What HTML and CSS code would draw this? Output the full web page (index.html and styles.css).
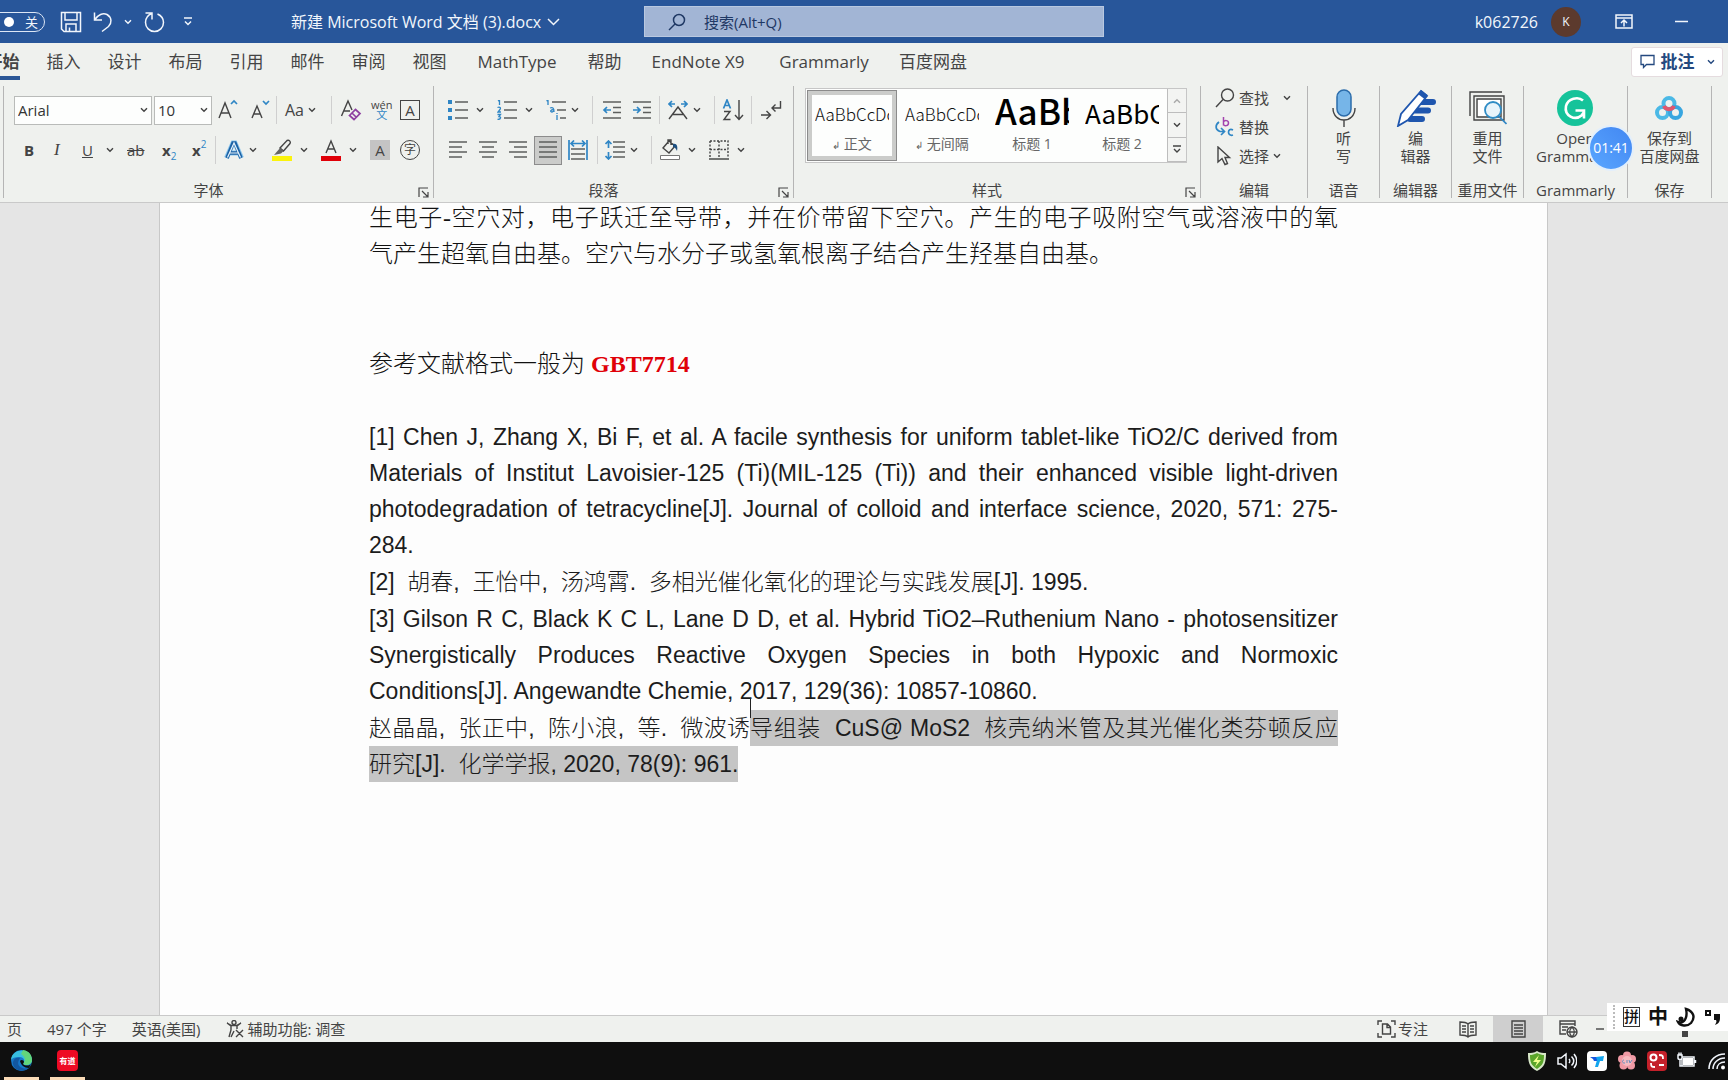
FILE: index.html
```html
<!DOCTYPE html>
<html lang="zh-CN">
<head>
<meta charset="utf-8">
<title>新建 Microsoft Word 文档 (3).docx</title>
<link rel="stylesheet" href="styles.css">
</head>
<body>
<svg class="defs" aria-hidden="true">
  <symbol id="chev" viewBox="0 0 8 6"><path d="M1 1.2 4 4.3 7 1.2" fill="none" stroke="currentColor" stroke-width="1.4"/></symbol>
  <symbol id="launch" viewBox="0 0 11 11"><path d="M1 10V1h9M4 4l5.500 5.500M10 5v5H5" fill="none" stroke="currentColor" stroke-width="1.200"/></symbol>
</svg>

<header class="titlebar">
  <div class="quick">
    <button class="toggle" aria-label="自动保存"><i></i><span>关</span></button>
    <button aria-label="保存"><svg width="22" height="22" viewBox="0 0 22 22"><path d="M1.500 1.500h19v19H4l-2.500-2.500zM5 1.500V9h12V1.500M6 20.500V13h10v7.500M9.500 20.500v-4" class="w"/></svg></button>
    <button aria-label="撤消"><svg width="20" height="22" viewBox="0 0 20 22"><path d="M1.500 1.500V9H9M1.500 9C5 3.500 10 1.500 14 3.500c5 3 5 8.500 1.500 12L9 20.500" class="w"/></svg></button>
    <button aria-label="撤消列表"><svg width="8" height="6"><use href="#chev"/></svg></button>
    <button aria-label="重复"><svg width="22" height="22" viewBox="0 0 22 22"><path d="M1.500 2H8v6.500M8 2.500C4 4 1.500 7.500 1.500 11.500a9 9 0 0 0 18 0c0-4-2.500-7-6-8.500" class="w"/></svg></button>
    <button aria-label="自定义快速访问工具栏"><svg width="10" height="10" viewBox="0 0 10 10"><path d="M1 1h8M2 4.500l3 3 3-3" class="w"/></svg></button>
  </div>
  <div class="doc-name">新建 Microsoft Word 文档 (3).docx<svg width="13" height="8" viewBox="0 0 13 8"><path d="M1 1l5.500 5.500L12 1" class="w"/></svg></div>
  <label class="search"><svg width="18" height="18" viewBox="0 0 18 18"><circle cx="11" cy="7" r="5.500" fill="none" stroke="#1f3864" stroke-width="1.500"/><path d="M7 11 1 17" stroke="#1f3864" stroke-width="1.500"/></svg><input type="text" placeholder="搜索(Alt+Q)" aria-label="搜索"></label>
  <div class="account">
    <span>k062726</span><span class="avatar">K</span>
    <button aria-label="功能区显示选项"><svg width="18" height="15" viewBox="0 0 18 15"><path d="M1 1h16v13H1zM1 4h16M9 12.500V6.500M6 9l3-3 3 3" class="w"/></svg></button>
    <button aria-label="最小化"><svg width="13" height="3"><path d="M0 1.500h13" class="w"/></svg></button>
  </div>
</header>

<nav class="tabs">
  <a href="#" class="active"><span>开始</span></a><a href="#">插入</a><a href="#">设计</a><a href="#">布局</a><a href="#">引用</a><a href="#">邮件</a><a href="#">审阅</a><a href="#">视图</a><a href="#" class="t-math">MathType</a><a href="#">帮助</a><a href="#" class="t-wide">EndNote X9</a><a href="#" class="t-wide">Grammarly</a><a href="#" class="t-pan">百度网盘</a>
  <button class="comments"><svg width="15" height="15" viewBox="0 0 15 15"><path d="M1 1.500h13v9H6.500L3.500 13.500v-3H1z" fill="none" stroke="#24497f" stroke-width="1.300"/></svg><b>批注</b><svg width="8" height="6"><use href="#chev"/></svg></button>
</nav>

<section class="ribbon">
  <div class="group g-font">
    <div class="row font-1">
      <div class="combo family"><select aria-label="字体"><option>Arial</option></select><svg width="8" height="6"><use href="#chev"/></svg></div>
      <div class="combo size"><select aria-label="字号"><option>10</option></select><svg width="8" height="6"><use href="#chev"/></svg></div>
      <button aria-label="增大字号"><svg width="20" height="22" viewBox="0 0 20 22"><path d="M1 19 7 4l6 15M3 14h8" class="k"/><path d="M13 5l3-3 3 3" class="b"/></svg></button>
      <button aria-label="减小字号"><svg width="20" height="22" viewBox="0 0 20 22"><path d="M1 19 6 7l5 12M2.500 15h7" class="k"/><path d="M12 2l3 3 3-3" class="b"/></svg></button>
      <i class="sep"></i>
      <button class="aa">Aa<svg width="8" height="6"><use href="#chev"/></svg></button>
      <i class="sep"></i>
      <button aria-label="清除格式"><svg width="22" height="22" viewBox="0 0 22 22"><path d="M1.500 17 8 2l4 9M4 12h6" class="k"/><path d="M9.500 16.500l6-6 4.500 4-6 6zM12 14l4.500 4.500" fill="none" stroke="#8e3fa0" stroke-width="1.700"/></svg></button>
      <button class="pinyin" aria-label="拼音指南"><span>wén</span><span>文</span></button>
      <button class="boxed">A</button>
    </div>
    <div class="row font-2">
      <button><b>B</b></button><button><em>I</em></button><button><u>U</u></button><button aria-label="下划线样式"><svg width="8" height="6"><use href="#chev"/></svg></button>
      <button><s>ab</s></button><button class="script"><b>x</b><sub>2</sub></button><button class="script"><b>x</b><sup>2</sup></button>
      <i class="sep"></i>
      <button aria-label="文本效果"><svg width="20" height="22" viewBox="0 0 20 22"><path d="M2.500 19 9 4h2l6.500 15M5.500 14h9" fill="none" stroke="#8cc7ee" stroke-width="5"/><path d="M3 19 9 4h2l6 15M5.500 14h9" fill="none" stroke="#1c62a5" stroke-width="3.500"/><path d="M3.500 18.500 10 4l6.500 14.500M6 14h8" fill="none" stroke="#e8f4fc" stroke-width="1.200"/></svg></button>
      <button aria-label="文本效果选项"><svg width="8" height="6"><use href="#chev"/></svg></button>
      <button aria-label="突出显示"><svg width="20" height="22" viewBox="0 0 20 22"><path d="M0 17h20v5H0z" fill="#fbf30c"/><path d="M8 9l7-7.500c2-1 4 1 3 3L11.500 12z" class="k"/><path d="M8 9l3.500 3L9 14.500 2 16z" fill="#666"/></svg></button>
      <button aria-label="突出显示颜色"><svg width="8" height="6"><use href="#chev"/></svg></button>
      <button aria-label="字体颜色"><svg width="20" height="22" viewBox="0 0 20 22"><path d="M0 17h20v5H0z" fill="#e00008"/><path d="M5 14 10 2l5 12M6.500 10h7" class="k"/></svg></button>
      <button aria-label="字体颜色选项"><svg width="8" height="6"><use href="#chev"/></svg></button>
      <button class="shade">A</button><button class="ring">字</button>
    </div>
    <div class="caption tool">字体<button aria-label="字体设置"><svg width="11" height="11"><use href="#launch"/></svg></button></div>
  </div>

  <div class="group g-para">
    <div class="row para-1">
      <button aria-label="项目符号"><svg width="20" height="20" viewBox="0 0 20 20"><path d="M0 0h4v4H0zM0 8h4v4H0zM0 16h4v4H0z" fill="#2f86c5"/><path d="M7 2h13M7 10h13M7 18h13" class="l"/></svg></button>
      <button aria-label="项目符号库"><svg width="8" height="6"><use href="#chev"/></svg></button>
      <button aria-label="编号"><svg width="20" height="20" viewBox="0 0 20 20"><path d="M1 1l1.500-1v5M.5 7.500C3 6.500 4 8 3 9.500L1 12h3M.5 14.500h3L2 16.500c2.500 0 2 3-1.500 3" fill="none" stroke="#2f86c5" stroke-width="1.300"/><path d="M7 2h13M7 10h13M7 18h13" class="l"/></svg></button>
      <button aria-label="编号库"><svg width="8" height="6"><use href="#chev"/></svg></button>
      <button aria-label="多级列表"><svg width="20" height="20" viewBox="0 0 20 20"><path d="M.5 1 2 0v5M4 8c3-1 4 0 4 4M8 9.500c-4 0-4 2.500-2 2.500l2-1M11 15v5M11 13v1" fill="none" stroke="#2f86c5" stroke-width="1.300"/><path d="M6 2h14M11 10h9M14 18h6" class="l"/></svg></button>
      <button aria-label="多级列表库"><svg width="8" height="6"><use href="#chev"/></svg></button>
      <i class="sep"></i>
      <button aria-label="减少缩进量"><svg width="20" height="18" viewBox="0 0 20 18"><path d="M1 1h18M11 6.500h8M11 11.500h8M1 17h18" class="l"/><path d="M9 9H2M5 6 2 9l3 3" class="b"/></svg></button>
      <button aria-label="增加缩进量"><svg width="20" height="18" viewBox="0 0 20 18"><path d="M1 1h18M11 6.500h8M11 11.500h8M1 17h18" class="l"/><path d="M1 9h7M5 6l3 3-3 3" class="b"/></svg></button>
      <i class="sep"></i>
      <button aria-label="中文版式"><svg width="20" height="20" viewBox="0 0 20 20"><path d="M1 19 10 7l9 12M5 14.500h10" class="k"/><path d="M7 4H1M4 1 1 4l3 3M13 4h6M16 1l3 3-3 3" class="b"/></svg></button>
      <button aria-label="中文版式选项"><svg width="8" height="6"><use href="#chev"/></svg></button>
      <i class="sep"></i>
      <button aria-label="排序"><svg width="22" height="22" viewBox="0 0 22 22"><path d="M1.500 9.500 5 1l3.500 8.500M3 6.500h4" class="b"/><path d="M2 12.500h6L2 20.500h6.500M17 1v19M13 16l4 4.500 4-4.500" class="k"/></svg></button>
      <i class="sep"></i>
      <button aria-label="显示编辑标记"><svg width="22" height="20" viewBox="0 0 22 20"><path d="M1 15h9M6.500 11l4 4-4 4M20.500 1v7H12M15.500 4.500 12 8l3.500 3.500" class="k"/></svg></button>
    </div>
    <div class="row para-2">
      <button aria-label="左对齐"><svg width="18" height="18" viewBox="0 0 18 18"><path d="M0 1h18M0 6h13M0 11h18M0 16h13" class="l"/></svg></button>
      <button aria-label="居中"><svg width="18" height="18" viewBox="0 0 18 18"><path d="M0 1h18M3 6h12M0 11h18M3 16h12" class="l"/></svg></button>
      <button aria-label="右对齐"><svg width="18" height="18" viewBox="0 0 18 18"><path d="M0 1h18M5 6h13M0 11h18M5 16h13" class="l"/></svg></button>
      <button class="pressed" aria-label="两端对齐"><svg width="18" height="18" viewBox="0 0 18 18"><path d="M0 1h18M0 6h18M0 11h18M0 16h18" class="l"/></svg></button>
      <button aria-label="分散对齐"><svg width="20" height="20" viewBox="0 0 20 20"><path d="M1 0v20M19 0v20M3 3.500h14M6 .500l-3 3 3 3M14 .500l3 3-3 3" class="b"/><path d="M3 9h14M3 14h14M3 19h14" class="l"/></svg></button>
      <i class="sep"></i>
      <button aria-label="行和段落间距"><svg width="20" height="20" viewBox="0 0 20 20"><path d="M8 2h12M8 7h12M8 12h12M8 17h12" class="l"/><path d="M3.500 1v7M.5 4l3-3 3 3M3.500 12v7M.5 16l3 3 3-3" class="b"/></svg></button>
      <button aria-label="行距选项"><svg width="8" height="6"><use href="#chev"/></svg></button>
      <i class="sep"></i>
      <button aria-label="底纹"><svg width="20" height="22" viewBox="0 0 20 22"><path d="M.5 16.500h19v4H.5z" fill="#fff" stroke="#777"/><path d="M9 2 3 9l6 5 6-7zM8 5V1h3v5" class="k"/><path d="M13 5c4-1 5 3 4 7-1-2-2-4-4-4z" fill="#1c4f80"/></svg></button>
      <button aria-label="底纹颜色"><svg width="8" height="6"><use href="#chev"/></svg></button>
      <button aria-label="边框"><svg width="20" height="20" viewBox="0 0 20 20"><path d="M1 1h18v17M1 1v17M10 1v17M1 9.500h18" fill="none" stroke="#444" stroke-width="1.400" stroke-dasharray="2 1.500"/><path d="M0 19h20" class="l"/></svg></button>
      <button aria-label="边框选项"><svg width="8" height="6"><use href="#chev"/></svg></button>
    </div>
    <div class="caption tool">段落<button aria-label="段落设置"><svg width="11" height="11"><use href="#launch"/></svg></button></div>
  </div>

  <div class="group g-style">
    <div class="gallery">
      <button class="card chosen"><span class="sample">AaBbCcDc</span><span class="name"><small>↲</small> 正文</span></button>
      <button class="card"><span class="sample">AaBbCcDc</span><span class="name"><small>↲</small> 无间隔</span></button>
      <button class="card"><span class="sample h1">AaBb</span><span class="name">标题 1</span></button>
      <button class="card"><span class="sample h2">AaBbC</span><span class="name">标题 2</span></button>
      <div class="scroller">
        <button class="off" aria-label="上一行"><svg class="flip" width="8" height="6"><use href="#chev"/></svg></button>
        <button aria-label="下一行"><svg width="8" height="6"><use href="#chev"/></svg></button>
        <button aria-label="其他"><svg width="10" height="9" viewBox="0 0 10 9"><path d="M1 1h8M2 4l3 3 3-3" class="k"/></svg></button>
      </div>
    </div>
    <div class="caption tool">样式<button aria-label="样式窗格"><svg width="11" height="11"><use href="#launch"/></svg></button></div>
  </div>

  <div class="group g-edit">
    <div class="commands">
      <button><svg width="20" height="20" viewBox="0 0 20 20"><circle cx="12.500" cy="7" r="6" class="k"/><path d="M8 11.500 1 19" class="k"/></svg>查找<svg class="far" width="8" height="6"><use href="#chev"/></svg></button>
      <button><svg width="20" height="20" viewBox="0 0 20 20"><path d="M8.500 0v8.500M8.500 5c1-2 5-2 5 1s-4 3.500-5 1.500" fill="none" stroke="#a344ae" stroke-width="1.500"/><path d="M4 5C0 8 0 13 5 14.500h4M6 11l3.500 3.500L6 18M18 13c-6-3-6 7 0 5" class="b"/></svg>替换</button>
      <button><svg width="20" height="20" viewBox="0 0 20 20"><path d="M3 1v15l4-3.500L10 18.500l2.500-1-2.500-6h4.500z" class="k"/></svg>选择<svg width="8" height="6"><use href="#chev"/></svg></button>
    </div>
    <div class="caption">编辑</div>
  </div>

  <div class="group g-one">
    <button class="big"><svg width="24" height="38" viewBox="0 0 24 38"><rect x="5" y="1" width="14" height="26" rx="7" fill="#76b5e8" stroke="#2b6cab" stroke-width="1.500"/><path d="M1 19c0 16 22 16 22 0M12 31v7" class="k"/></svg><span>听<br>写</span></button>
    <div class="caption">语音</div>
  </div>
  <div class="group g-one">
    <button class="big"><svg width="40" height="38" viewBox="0 0 40 38"><path d="M24 13h13M19 21.500h13M14 30h12" stroke="#1f56ae" stroke-width="6" stroke-linecap="round"/><path d="M25 2l6 5L12 31 2 37l3-12z" fill="#fff" stroke="#1f56ae" stroke-width="1.800"/><path d="M25 1l6.500 5-3 4L22 5z" fill="#1f56ae"/></svg><span>编<br>辑器</span></button>
    <div class="caption">编辑器</div>
  </div>
  <div class="group g-one">
    <button class="big"><svg width="38" height="34" viewBox="0 0 38 34"><path d="M1 25V1h32M5 5h30v24H5zM8 8h24v18H8z" class="k"/><path d="M9 9h22v16H9z" fill="#fff"/><circle cx="24" cy="19" r="8" fill="#e8f4fb" stroke="#2f8cc5" stroke-width="1.800"/><path d="M29.500 25l8 8" class="b"/></svg><span>重用<br>文件</span></button>
    <div class="caption">重用文件</div>
  </div>
  <div class="group g-gram">
    <button class="big"><svg width="36" height="36" viewBox="0 0 36 36"><circle cx="18" cy="18" r="18" fill="#15c39a"/><path d="M26 10.500C21 6 11 8.500 9 16c-2 10 9 15 15.500 9.500L27 22M18.500 20.500h8.500v8" fill="none" stroke="#fff" stroke-width="2.600"/></svg><span>Open<br>Grammarly</span></button>
    <div class="caption">Grammarly</div>
    <div class="timer">01:41</div>
  </div>
  <div class="group g-pan">
    <button class="big"><svg width="28" height="24" viewBox="0 0 28 24"><g fill="none" stroke-width="4"><circle cx="14" cy="7.500" r="5.500" stroke="#4bb9e6"/><circle cx="7.500" cy="16.500" r="5.500" stroke="#4bb9e6"/><circle cx="20.500" cy="16.500" r="5.500" stroke="#38a6e0"/><path d="M9 10a5.500 5.500 0 0 0 10 0" stroke="#e0566d"/></g></svg><span>保存到<br>百度网盘</span></button>
    <div class="caption">保存</div>
  </div>
</section>

<main class="canvas">
  <article class="page">
    <div class="body-text">
      <div class="full">生电子-空穴对，电子跃迁至导带，并在价带留下空穴。产生的电子吸附空气或溶液中的氧</div>
      <div>气产生超氧自由基。空穴与水分子或氢氧根离子结合产生羟基自由基。</div>
    </div>
    <h2 class="heading">参考文献格式一般为 <b>GBT7714</b></h2>
    <div class="refs">
      <div class="ref">
        <div class="full">[1] Chen J, Zhang X, Bi F, et al. A facile synthesis for uniform tablet-like TiO2/C derived from</div>
        <div class="full">Materials of Institut Lavoisier-125 (Ti)(MIL-125 (Ti)) and their enhanced visible light-driven</div>
        <div class="full">photodegradation of tetracycline[J]. Journal of colloid and interface science, 2020, 571: 275-</div>
        <div>284.</div>
      </div>
      <div class="ref">[2]&nbsp; 胡春,&nbsp; 王怡中,&nbsp; 汤鸿霄.&nbsp; 多相光催化氧化的理论与实践发展[J]. 1995.</div>
      <div class="ref">
        <div class="full">[3] Gilson R C, Black K C L, Lane D D, et al. Hybrid TiO2–Ruthenium Nano - photosensitizer</div>
        <div class="full">Synergistically Produces Reactive Oxygen Species in both Hypoxic and Normoxic</div>
        <div>Conditions[J]. Angewandte Chemie, 2017, 129(36): 10857-10860.</div>
      </div>
      <div class="ref">
        <div class="split"><span class="full">赵晶晶,&nbsp; 张正中,&nbsp; 陈小浪,&nbsp; 等.&nbsp; 微波诱</span><mark class="full caret">导组装&nbsp; CuS@ MoS2&nbsp; 核壳纳米管及其光催化类芬顿反应</mark></div>
        <mark>研究[J].&nbsp; 化学学报, 2020, 78(9): 961.</mark>
      </div>
    </div>
  </article>
</main>

<footer class="status">
  <div class="facts"><span>页</span><span>497 个字</span><span>英语(美国)</span><span class="with-icon"><svg width="18" height="18" viewBox="0 0 18 18"><circle cx="8" cy="2.500" r="2" class="k"/><path d="M1 3l4 3v4l-2 7M15 3l-4 3v3M1 3l4.500 2.500h5L15 3M5 17l3-6M10 10l7 7M17 10l-7 7" class="k"/></svg>辅助功能: 调查</span></div>
  <div class="views">
    <button class="with-icon"><svg width="19" height="18" viewBox="0 0 19 18"><path d="M5 1H1v4M14 1h4v4M1 13v4h4M18 13v4h-4M5.500 4h5l3 3v7h-8zM10 4v3.500h3.500" class="k"/></svg>专注</button>
    <button aria-label="阅读视图"><svg width="18" height="17" viewBox="0 0 18 17"><path d="M9 3C7 1 4 1 1 1v13c3 0 6 0 8 2 2-2 5-2 8-2V1c-3 0-6 0-8 2zM9 3v13M3 5h4M3 8h4M3 11h4M11 5h4M11 8h4M11 11h4" class="k"/></svg></button>
    <button class="on" aria-label="页面视图"><svg width="15" height="18" viewBox="0 0 15 18"><path d="M1 1h13v16H1zM3 5h9M3 8h9M3 11h9M3 14h9" class="k"/></svg></button>
    <button aria-label="Web 版式"><svg width="19" height="18" viewBox="0 0 19 18"><path d="M7 14H1V1h15v5M1 4h15M3 7h6M3 10h4" class="k"/><circle cx="13" cy="12" r="5" class="k"/><path d="M8 12h10M13 7c-3 3-3 7 0 10M13 7c3 3 3 7 0 10" class="k"/></svg></button>
    <button class="zoom-out" aria-label="缩小"><svg width="8" height="2"><path d="M0 1h8" class="k"/></svg></button>
    <i class="thumb"></i>
  </div>
  <div class="ime"><i class="grip"></i><span class="pin">拼</span><span>中</span>
    <svg width="20" height="20" viewBox="0 0 20 20"><path d="M10 2c7 2 10 8 5 14-4 4-11 3-13-1 6 2 10-4 8-13z" class="moon"/><circle cx="5" cy="12" r="2.500" fill="#111"/></svg>
    <svg width="18" height="18" viewBox="0 0 18 18"><path d="M2 3h4v4H2z" fill="none" stroke="#111" stroke-width="2"/><path d="M10 6h6v4c0 4-2 6-5 7 1-2 2-3 1-5h-2z" fill="#111"/></svg>
    <svg width="8" height="20" viewBox="0 0 8 20"><path d="M1 5l6-3v3H4v13H2V8z" fill="#111"/></svg>
  </div>
</footer>

<div class="taskbar">
  <div class="apps">
    <button aria-label="Edge"><svg width="21" height="21" viewBox="0 0 21 21"><circle cx="10.500" cy="10.500" r="10.500" fill="#1677c8"/><path d="M0 10C1-2 20-3 21 10c0 5-6 6-9 4 3-4 0-7-4-7-4 0-7 1-8 3z" fill="#38bfe0"/><path d="M12 0c7 1 9 6 9 10 0 5-6 6-9 4 4-5 1-8-2-10z" fill="#62d67c"/><path d="M8 10c-3 5 2 10 10 8-8 6-17 1-16-6 1-4 4-5 7-4z" fill="#1257a0"/><path d="M12 14c2 2 6 2 8 0l-2 4c-5 0-8-3-9-7 1-2 4-1 4 1z" fill="#0f0f0f"/></svg></button>
    <button aria-label="有道"><span class="youdao">有道</span></button>
  </div>
  <div class="tray">
    <svg viewBox="0 0 20 20"><path d="M10 0c3 2 6 2 9 2 0 9-1 14-9 18C2 16 1 11 1 2c3 0 6 0 9-2z" fill="#d8e8c8"/><path d="M10 2c3 1.500 5 2 7 2 0 7-1 10-7 14-6-4-7-7-7-14 2 0 4-.5 7-2z" fill="#5aa52a"/><path d="M12 4 6 11h4l-2 5 6-7h-4z" fill="#f2ff8c"/></svg>
    <svg viewBox="0 0 20 20"><path d="M1 7h3l5-4v14l-5-4H1zM12 8c1 1 1 3 0 4M14.500 5.500c3 3 3 6 0 9M17 3c4 5 4 9 0 14" class="w"/></svg>
    <svg viewBox="0 0 20 20"><rect width="20" height="20" rx="4" fill="#fff"/><path d="M3 6h9l-2 4H7L6 8z" fill="#1556e0"/><path d="M9 6l8-1-1 5h-3l-2 6H8l2-7z" fill="#12a5ee"/></svg>
    <svg viewBox="0 0 20 20"><g fill="#f09aa5"><circle cx="10" cy="4.500" r="4"/><circle cx="15" cy="8" r="4"/><circle cx="14" cy="14.500" r="4"/><circle cx="6.500" cy="14.500" r="4"/><circle cx="5" cy="8" r="4"/></g><circle cx="10" cy="10" r="5" fill="#f7bac0"/><path d="M7 9c-2 0-2 3 0 3h1M10 9v3M12 9l1 3 2-3" fill="none" stroke="#698dbb"/></svg>
    <svg viewBox="0 0 20 20"><rect width="20" height="20" rx="4" fill="#c4202a"/><circle cx="6.500" cy="6.500" r="3" fill="none" stroke="#fff" stroke-width="2"/><path d="M12 4c4 0 4 1 4 4M4 12c0 4 1 4 4 4M12 14h5" fill="none" stroke="#fff" stroke-width="1.800"/></svg>
    <svg viewBox="0 0 20 20"><path d="M5 6h12v9H5zM18.500 9v3M1 4h4v3c0 2-4 2-4 0zM2 1.500V4M4 1.500V4M3 8v7h2" class="w"/><path d="M6 7h10v7H6z" fill="#fff"/></svg>
    <svg viewBox="0 0 20 20"><path d="M2 18C2 9 9 3 18 3M6 18c0-6 5-11 12-11M10 18c0-4 3-7 8-7" class="w"/><circle cx="16" cy="16.500" r="2" fill="#fff"/></svg>
  </div>
</div>
</body>
</html>
```
FILE: styles.css
```css
* { box-sizing: border-box; }
body {
  margin: 0;
  min-height: 100vh;
  display: flex;
  flex-direction: column;
  overflow-x: hidden;
  background: #eff1ee;
  color: #444;
  font: 15px/20px "Open Sans", "Noto Sans CJK SC", sans-serif;
}
button {
  display: flex;
  align-items: center;
  justify-content: center;
  margin: 0;
  padding: 0;
  border: 0;
  background: none;
  color: inherit;
  font: inherit;
}
svg { flex: none; display: block; }
.defs { position: absolute; width: 0; height: 0; }
.w { fill: none; stroke: #f2f6fc; stroke-width: 1.5; }
.k { fill: none; stroke: #444; stroke-width: 1.4; }
.b { fill: none; stroke: #2f86c5; stroke-width: 1.7; }
.l { fill: none; stroke: #5d5f5d; stroke-width: 1.7; }

/* Title bar */
.titlebar {
  height: 43px;
  flex: none;
  display: grid;
  grid-template-columns: 291px 353px 460px 1fr;
  align-items: center;
  background: #28569a;
  color: #f2f6fc;
}
.quick {
  display: grid;
  grid-template-columns: 55px 32px 31px 20px 33px 34px;
  height: 40px;
  justify-items: center;
  align-items: center;
}
.quick .toggle {
  width: 60px;
  height: 20px;
  justify-self: end;
  margin-right: 10px;
  padding: 0 6px 0 18px;
  border: 1px solid #dce6f5;
  border-radius: 10px;
  justify-content: space-between;
  font-size: 13px;
}
.toggle i { width: 10px; height: 10px; border-radius: 50%; background: #fff; }
.doc-name { display: flex; align-items: center; gap: 6px; height: 40px; font-size: 16px; white-space: nowrap; }
.search {
  height: 31px;
  display: flex;
  align-items: center;
  gap: 18px;
  padding-left: 23px;
  border: 1px solid #b9c8e0;
  background: #a2b5d5;
}
.search input { flex: 1; border: 0; padding: 0; outline: 0; background: none; color: #1f3864; font: inherit; }
.search input::placeholder { color: #1f3864; opacity: 1; }
.account { display: flex; align-items: center; justify-content: flex-end; height: 40px; padding-right: 40px; font-size: 16px; }
.avatar {
  width: 30px;
  height: 30px;
  margin: 0 34px 0 13px;
  border-radius: 50%;
  background: #5c3a2d;
  text-align: center;
  font-size: 12px;
  line-height: 30px;
}
.account button + button { margin-left: 42px; }

/* Tabs */
.tabs { height: 37px; flex: none; display: flex; align-items: center; margin-left: -28px; font-size: 17px; }
.tabs a { width: 61px; height: 36px; text-align: center; line-height: 36px; color: inherit; text-decoration: none; white-space: nowrap; }
.tabs .active { font-weight: 700; }
.active span { display: inline-block; height: 36px; border-bottom: 4px solid #2b5797; }
.tabs .t-math { width: 114px; }
.tabs .t-wide { width: 126px; }
.tabs .t-pan { width: 92px; }
.comments {
  width: 92px;
  height: 30px;
  margin: 0 5px 0 auto;
  gap: 6px;
  background: #fff;
  border: 1px solid #e5dcdf;
  border-radius: 3px;
  color: #24497f;
}
.comments svg:last-child { margin-left: 6px; }

/* Ribbon */
.ribbon { flex: none; display: flex; height: 123px; padding: 6px 0 4px 3px; border-bottom: 1px solid #c9c9c9; }
.group { position: relative; flex: none; display: flex; flex-direction: column; border-right: 1px solid #b5b5b5; }
.g-font { width: 431px; border-left: 1px solid #b5b5b5; padding-top: 4px; }
.g-para { width: 360px; padding-top: 4px; }
.g-style { width: 407px; }
.g-edit { width: 107px; }
.g-one { width: 72px; }
.g-gram { width: 104px; }
.g-pan { width: 84px; }
.row { display: grid; height: 40px; align-items: center; justify-items: start; }
.font-1 { grid-template-columns: 140px 64px 33px 25px 9px 46px 9px 31px 29px 20px; padding-left: 10px; }
.font-2 { grid-template-columns: 30px 28px 24px 21px 35px 30px 23px 9px 25px 23px 28px 21px 28px 21px 30px 20px; padding-left: 20px; }
.para-1 { grid-template-columns: 28px 21px 28px 21px 25px 21px 10px 30px 27px 9px 25px 21px 8px 29px 9px 22px; padding-left: 14px; }
.para-2 { grid-template-columns: 30px 30px 25px 34px 29px 8px 25px 21px 9px 28px 21px 28px 8px; padding-left: 15px; }
.row > button { min-height: 29px; }
.sep { width: 1px; height: 28px; background: #cfcfcf; }
.combo { display: grid; height: 29px; border: 1px solid #b9bbb9; background: #fdfefd; align-items: center; }
.family { width: 138px; }
.size { width: 58px; }
.combo > * { grid-area: 1 / 1; }
.combo select { width: 100%; height: 27px; border: 0; padding: 0 3px; appearance: none; background: none; color: #333; font: inherit; }
.combo svg { justify-self: end; margin-right: 3px; pointer-events: none; }
.aa { gap: 4px; font-size: 16px; }
.pinyin { flex-direction: column; font-size: 11px; line-height: 10px; }
.pinyin span:last-child { color: #2f86c5; }
.row .boxed { width: 20px; min-height: 20px; height: 20px; border: 1px solid #444; }
.row .shade { width: 20px; min-height: 20px; height: 20px; background: #c4c4c4; }
.row .ring { width: 20px; min-height: 20px; height: 20px; border: 1px solid #444; border-radius: 50%; font-size: 12px; }
.font-2 em { font-family: "Liberation Serif", serif; font-size: 17px; }
.script sub, .script sup { font-size: 10px; line-height: 10px; color: #2f86c5; }
.script sub { margin-top: 12px; }
.script sup { margin-bottom: 12px; }
.row .pressed { width: 28px; border: 1px solid #8c8c8c; background: #cbccca; }
.caption { display: flex; justify-content: center; height: 14px; margin-top: auto; line-height: 12px; white-space: nowrap; }
.tool { padding-right: 20px; }
.caption button { position: absolute; right: 4px; bottom: 0; }

.gallery { display: flex; width: 382px; height: 75px; margin: 2px 0 0 11px; border: 1px solid #c6c6c6; background: #fdfefd; padding-left: 1px; }
.card { width: 90px; flex-direction: column; justify-content: flex-start; margin-top: 1px; padding: 0 8px; height: 71px; }
.chosen { outline: 1px solid #8b8b8b; outline-offset: -1px; box-shadow: inset 0 0 0 5px #cbccca; }
.sample { width: 100%; height: 44px; overflow: hidden; text-align: left; white-space: nowrap; line-height: 48px; color: #111; font-family: "Noto Sans CJK SC", sans-serif; font-weight: 300; font-size: 17px; }
.h1 { font-size: 35px; font-weight: 500; line-height: 40px; color: #000; }
.h2 { font-size: 26px; font-weight: 400; line-height: 46px; color: #000; }
.name { white-space: nowrap; color: #666; font-size: 14px; }
.name small { font-size: 10px; }
.scroller { width: 19px; display: flex; flex-direction: column; }
.scroller button { flex: 1; border: 1px solid #bdbdbd; border-width: 0 0 1px 1px; background: #f3f4f2; }
.scroller .off { color: #aaa; }
.flip { transform: rotate(180deg); }

.commands { margin-top: -3px; padding-left: 14px; }
.commands button { height: 29px; gap: 4px; }
.commands .far { margin-left: 10px; }
.big { flex-direction: column; align-self: center; height: 78px; margin-top: 1px; line-height: 18px; text-align: center; }
.big svg { margin: auto; }
.timer {
  position: absolute;
  right: -7px;
  top: 39px;
  width: 46px;
  height: 46px;
  border: 2px solid #e2effc;
  border-radius: 50%;
  background: linear-gradient(45deg, #5aa6ff, #4287f2);
  color: #fff;
  text-align: center;
  line-height: 42px;
  font-size: 14px;
  z-index: 1;
}

/* Document */
.canvas { flex: 1; display: flex; padding: 0 180px 0 159px; overflow: hidden; background: #e5e5e5; }
.page { flex: 1; margin-top: -3px; padding: 0 209px; border: solid #c8c8c8; border-width: 0 1px; background: #fdfdfd; color: #1c1c1c; line-height: 36px; white-space: nowrap; }
.full { text-align: justify; text-align-last: justify; }
.body-text, .heading { font-family: "Liberation Serif", "Noto Sans CJK SC", serif; font-size: 24px; font-weight: 300; color: #111; }
.heading { margin: 74px 0 37px; }
.heading b { color: #e00008; font-weight: 700; }
.refs { display: flex; flex-direction: column; gap: 1px; font-family: "Liberation Sans", "Noto Sans CJK SC", sans-serif; font-size: 23px; font-weight: 300; }
.split { display: grid; grid-template-columns: 381fr 588fr; }
mark { display: inline-block; background: #c5c5c5; color: inherit; vertical-align: top; }
.caret { position: relative; }
.caret::before { content: ""; position: absolute; left: 0; top: -12px; width: 1px; height: 20px; background: #222; }

/* Status bar */
.status { position: relative; flex: none; height: 27px; display: flex; justify-content: space-between; border-top: 1px solid #c9c9c9; }
.facts { display: flex; align-items: center; gap: 25px; padding-left: 7px; }
.with-icon { display: flex; align-items: center; gap: 4px; }
.views { display: grid; grid-template-columns: 84px 50px 50px 50px 14px 121px; justify-items: center; align-items: center; }
.views .with-icon { gap: 2px; justify-self: start; padding-left: 18px; }
.views .on { width: 50px; height: 26px; background: #cfcfcf; }
.views .thumb { width: 6px; height: 6px; align-self: end; margin-left: 34px; margin-bottom: 5px; background: #444; }
.ime { position: absolute; right: 0; bottom: 11px; width: 121px; height: 28px; display: flex; align-items: center; gap: 8px; padding-left: 6px; overflow: hidden; background: #fff; color: #111; font-size: 20px; font-weight: 700; }
.ime .pin { width: 20px; height: 20px; border: 1px solid #333; font-size: 15px; line-height: 17px; text-align: center; font-weight: 500; }
.grip { width: 2px; height: 24px; border-left: 2px dotted #bbb; }
.moon { fill: none; stroke: #111; stroke-width: 2.4; }

/* Taskbar */
.taskbar { flex: none; height: 38px; display: flex; justify-content: space-between; background: #0f0f0f; }
.apps { display: flex; gap: 11px; padding-left: 4px; }
.apps button { width: 35px; padding-top: 2px; border-bottom: 3px solid #fbdcb8; }
.youdao { width: 21px; height: 21px; border-radius: 4px; background: #ee0a24; color: #fff; font-size: 8px; line-height: 21px; font-weight: 700; }
.tray { display: flex; align-items: center; gap: 10px; padding-right: 1px; }
.tray svg { width: 20px; height: 20px; }
```
